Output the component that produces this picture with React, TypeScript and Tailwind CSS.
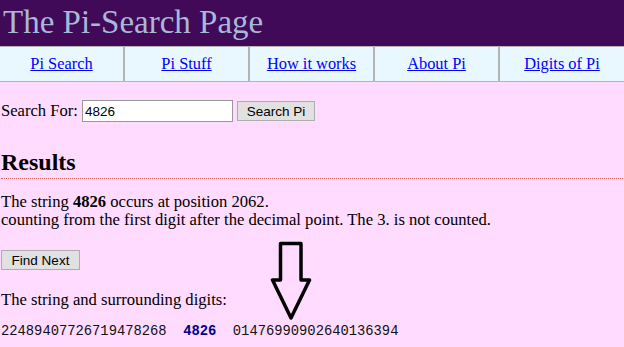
export default function App() {
  const links = ["Pi Search", "Pi Stuff", "How it works", "About Pi", "Digits of Pi"];
  return (
    <div className="relative min-h-[347px] bg-[#ffdcff] text-black font-['Liberation_Serif',serif] text-[16.6px]">
      {/* Header */}
      <div className="h-[46px] bg-[#400a58] px-[3px]">
        <h1 className="text-[33px] leading-[44px] text-[#a9b8d6]">The Pi-Search Page</h1>
      </div>

      {/* Nav bar */}
      <div className="flex h-[36px] border-y border-[#b4b4b4] bg-[#e9f8ff] text-[16.4px]">
        {links.map((l, i) => (
          <div
            key={l}
            className={
              "flex w-[125px] items-center justify-center " + (i < 4 ? "border-r-2 border-[#b4b4b4]" : "flex-1")
            }
          >
            <a href="#" className="text-[#0000ff] underline">
              {l}
            </a>
          </div>
        ))}
      </div>

      <div className="px-[1px]">
        {/* Search form */}
        <div className="mt-[17px] flex items-center">
          <span className="mr-[4px]">Search For:</span>
          <input
            defaultValue="4826"
            className="h-[22px] w-[151px] border border-[#999] bg-white px-[2px] font-['Liberation_Sans',sans-serif] text-[13.5px] outline-none"
          />
          <button className="ml-[4px] h-[20px] w-[78px] border border-[#adadad] bg-[#e1e1e1] font-['Liberation_Sans',sans-serif] text-[13.5px]">
            Search Pi
          </button>
        </div>

        {/* Results */}
        <h2 className="mt-[25px] border-b border-dotted border-[#e06060] pb-[3px] text-[24px] font-bold leading-[26px]">
          Results
        </h2>

        <p className="mt-[14px] leading-[18px]">
          The string <b>4826</b> occurs at position 2062.
          <br />
          counting from the first digit after the decimal point. The 3. is not counted.
        </p>

        <button className="mt-[21px] h-[20px] w-[79px] border border-[#adadad] bg-[#e1e1e1] font-['Liberation_Sans',sans-serif] text-[13.5px]">
          Find Next
        </button>

        <p className="mt-[18px] leading-[18px]">The string and surrounding digits:</p>

        <p className="mt-[14px] whitespace-pre font-['Liberation_Mono',monospace] text-[13.8px] leading-[18px] text-[#111]">
          22489407726719478268{"  "}
          <b className="text-[#00008b]">4826</b>
          {"  "}01476990902640136394
        </p>
      </div>

      {/* Annotation arrow */}
      <svg className="absolute left-[270px] top-[240px]" width="42" height="82" viewBox="0 0 42 82">
        <path
          d="M10.5 3.5 H31 V40 H39.5 L21 78 L2.5 40 H10.5 Z"
          fill="none"
          stroke="#000"
          strokeWidth="3.5"
          strokeLinejoin="round"
        />
      </svg>
    </div>
  );
}
